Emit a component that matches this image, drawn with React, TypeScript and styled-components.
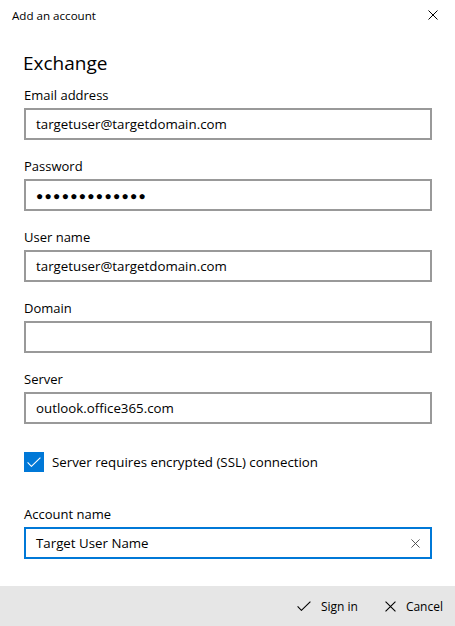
import React from "react";
import styled, { createGlobalStyle } from "styled-components";

const GlobalStyle = createGlobalStyle`
  html, body {
    margin: 0;
    padding: 0;
    background: #ffffff;
  }
  body {
    font-family: "Open Sans", "Noto Sans", sans-serif;
    color: #000000;
  }
`;

const Window = styled.div`
  width: 455px;
  height: 626px;
  display: flex;
  flex-direction: column;
  background: #ffffff;
`;

const TitleBar = styled.div`
  height: 30px;
  display: flex;
  align-items: center;
  justify-content: space-between;
  padding: 0 17px 0 12px;
  font-size: 11.6px;
`;

const IconButton = styled.button`
  border: none;
  background: none;
  padding: 0;
  width: 10px;
  height: 10px;
  display: flex;
  cursor: pointer;
`;

const Content = styled.div`
  flex: 1;
  display: flex;
  flex-direction: column;
  padding: 19px 23px 0 24px;
`;

const Heading = styled.h1`
  margin: 0 0 8px -1px;
  font-size: 19px;
  font-weight: 400;
  line-height: 28px;
`;

const Field = styled.div`
  display: flex;
  flex-direction: column;
  margin-bottom: 16px;
`;

const Label = styled.label`
  font-size: 13px;
  line-height: 20px;
  margin-bottom: 3px;
`;

const Box = styled.div<{ $focused?: boolean }>`
  height: 32px;
  box-sizing: border-box;
  border: 2px solid ${(p) => (p.$focused ? "#0078d7" : "#999999")};
  display: flex;
  align-items: center;
  padding: 0 10px;
  font-size: 13.3px;
`;

const Value = styled.span`
  flex: 1;
`;

const Dots = styled.span`
  flex: 1;
  font-size: 12px;
  letter-spacing: 1.3px;
`;

const CheckRow = styled.div`
  display: flex;
  align-items: center;
  gap: 8px;
  margin: 12px 0 32px;
  font-size: 13.3px;
`;

const CheckBox = styled.span`
  width: 20px;
  height: 20px;
  background: #0078d7;
  display: flex;
  align-items: center;
  justify-content: center;
`;

const Footer = styled.div`
  height: 40px;
  background: #e6e6e6;
  display: flex;
  align-items: center;
  justify-content: flex-end;
  gap: 27px;
  padding-right: 12px;
`;

const FooterButton = styled.button`
  border: none;
  background: none;
  padding: 0;
  display: flex;
  align-items: center;
  gap: 10px;
  font-family: inherit;
  font-size: 12px;
  color: #000000;
  cursor: pointer;
`;

const CloseIcon = ({ size = 10, color = "#000" }: { size?: number; color?: string }) => (
  <svg width={size} height={size} viewBox="0 0 10 10">
    <path d="M0.5 0.5 L9.5 9.5 M9.5 0.5 L0.5 9.5" stroke={color} strokeWidth="1" fill="none" />
  </svg>
);

const CheckIcon = ({ color = "#000", size = 14 }: { color?: string; size?: number }) => (
  <svg width={size} height={size * 0.72} viewBox="0 0 14 10">
    <path d="M0.6 5.4 L4.4 9.3 L13.4 0.5" stroke={color} strokeWidth="1.1" fill="none" />
  </svg>
);

type FieldProps = {
  label: string;
  value?: string;
  password?: boolean;
  focused?: boolean;
};

const FormField = ({ label, value, password, focused }: FieldProps) => (
  <Field>
    <Label>{label}</Label>
    <Box $focused={focused}>
      {password ? <Dots>{"●".repeat(13)}</Dots> : <Value>{value}</Value>}
      {focused && <CloseIcon size={9} color="#444" />}
    </Box>
  </Field>
);

export default function App() {
  return (
    <>
      <GlobalStyle />
      <Window>
        <TitleBar>
          <span>Add an account</span>
          <IconButton aria-label="Close">
            <CloseIcon />
          </IconButton>
        </TitleBar>
        <Content>
          <Heading>Exchange</Heading>
          <FormField label="Email address" value="targetuser@targetdomain.com" />
          <FormField label="Password" password />
          <FormField label="User name" value="targetuser@targetdomain.com" />
          <FormField label="Domain" value="" />
          <FormField label="Server" value="outlook.office365.com" />
          <CheckRow>
            <CheckBox>
              <CheckIcon color="#ffffff" size={14} />
            </CheckBox>
            <span>Server requires encrypted (SSL) connection</span>
          </CheckRow>
          <FormField label="Account name" value="Target User Name" focused />
        </Content>
        <Footer>
          <FooterButton>
            <CheckIcon />
            Sign in
          </FooterButton>
          <FooterButton>
            <CloseIcon size={11} />
            Cancel
          </FooterButton>
        </Footer>
      </Window>
    </>
  );
}
